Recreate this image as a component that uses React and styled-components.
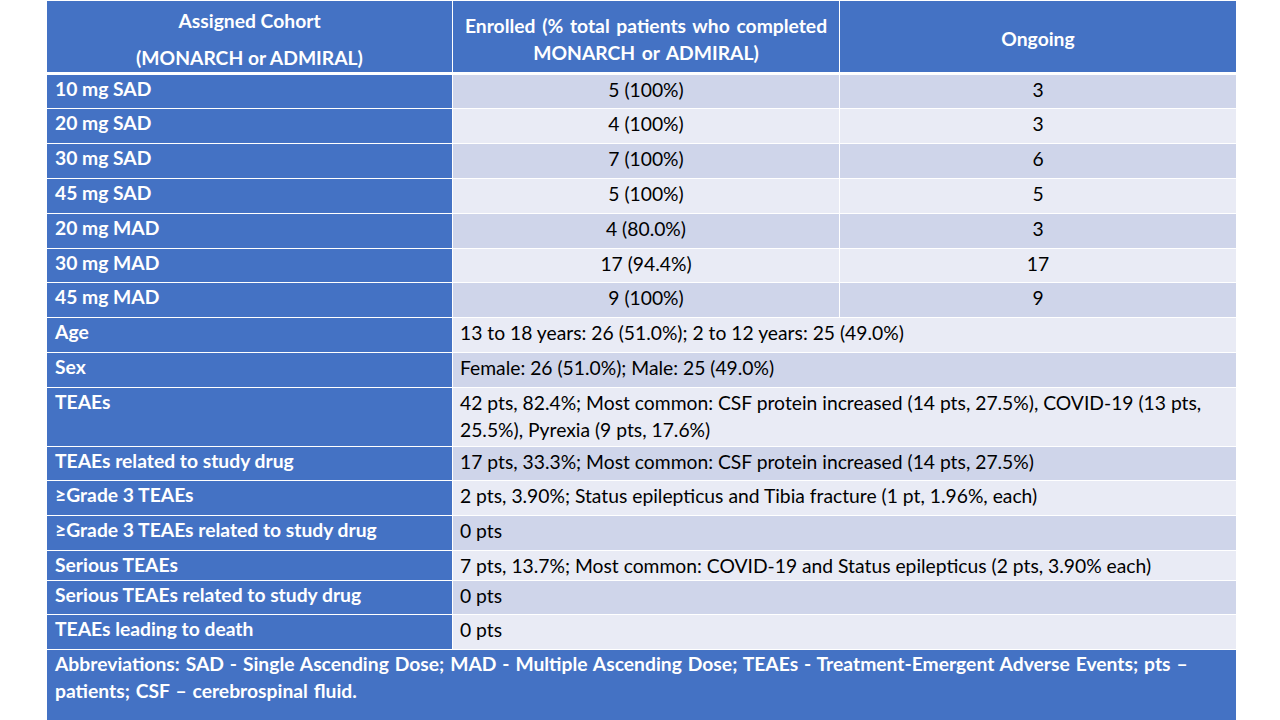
import React from 'react';
import styled, { createGlobalStyle } from 'styled-components';

const GlobalStyle = createGlobalStyle`
  html, body {
    margin: 0;
    padding: 0;
    background: #ffffff;
  }
  body {
    font-family: Lato, 'Liberation Sans', sans-serif;
  }
`;

const BLUE = '#4472c4';
const tones = {
  dark: '#cfd5ea',
  light: '#e9ebf5',
};

const Page = styled.div`
  width: 1280px;
  height: 720px;
  padding: 1px 0 0 47px;
  box-sizing: border-box;
  overflow: hidden;
`;

const Table = styled.div`
  display: grid;
  grid-template-columns: 405px 386px 396px;
  grid-template-rows:
    73px 33px 34px 34px 34px 34px 33px 34px 34px 34px 58px 33px 34px 34px
    29px 33px 34px 70px;
  column-gap: 1px;
  row-gap: 1px;
  width: 1189px;
  background: #ffffff;
  font-size: 19.3px;
  line-height: 27px;
`;

const HeadCell = styled.div`
  display: flex;
  flex-direction: column;
  align-items: center;
  justify-content: center;
  gap: ${props => props.$gap || 0}px;
  margin-bottom: 2px;
  padding-top: 4px;
  background: ${BLUE};
  color: #ffffff;
  font-weight: 700;
  text-align: center;
  white-space: nowrap;
  word-spacing: ${props => props.$spread || 0}px;
`;

const LabelCell = styled.div`
  padding: 0 8px;
  background: ${BLUE};
  color: #ffffff;
  font-weight: 700;
  white-space: nowrap;
`;

const ValueCell = styled.div`
  grid-column: span ${props => props.$span || 1};
  padding: 1px 7px 0;
  background: ${props => tones[props.$tone]};
  color: #000000;
  text-align: ${props => (props.$center ? 'center' : 'left')};
  white-space: nowrap;
`;

const Note = styled.div`
  grid-column: span 3;
  padding: 0 8px;
  background: ${BLUE};
  color: #ffffff;
  font-weight: 700;
  white-space: nowrap;
  word-spacing: 1.2px;
`;

const cohorts = [
  ['10 mg SAD', '5 (100%)', '3'],
  ['20 mg SAD', '4 (100%)', '3'],
  ['30 mg SAD', '7 (100%)', '6'],
  ['45 mg SAD', '5 (100%)', '5'],
  ['20 mg MAD', '4 (80.0%)', '3'],
  ['30 mg MAD', '17 (94.4%)', '17'],
  ['45 mg MAD', '9 (100%)', '9'],
];

const summary = [
  ['Age', '13 to 18 years: 26 (51.0%); 2 to 12 years: 25 (49.0%)'],
  ['Sex', 'Female: 26 (51.0%); Male: 25 (49.0%)'],
  [
    'TEAEs',
    <>
      42 pts, 82.4%; Most common: CSF protein increased (14 pts, 27.5%), COVID-19 (13 pts,
      <br />
      25.5%), Pyrexia (9 pts, 17.6%)
    </>,
  ],
  ['TEAEs related to study drug', '17 pts, 33.3%; Most common: CSF protein increased (14 pts, 27.5%)'],
  ['≥Grade 3 TEAEs', '2 pts, 3.90%; Status epilepticus and Tibia fracture (1 pt, 1.96%, each)'],
  ['≥Grade 3 TEAEs related to study drug', '0 pts'],
  ['Serious TEAEs', '7 pts, 13.7%; Most common: COVID-19 and Status epilepticus (2 pts, 3.90% each)'],
  ['Serious TEAEs related to study drug', '0 pts'],
  ['TEAEs leading to death', '0 pts'],
];

// rows alternate starting with the darker tint
const toneFor = i => (i % 2 === 0 ? 'dark' : 'light');

export default function App() {
  return (
    <Page>
      <GlobalStyle />
      <Table>
        <HeadCell $gap={10}>
          <span>Assigned Cohort</span>
          <span>(MONARCH or ADMIRAL)</span>
        </HeadCell>
        <HeadCell $spread={2}>
          <span>Enrolled (% total patients who completed</span>
          <span>MONARCH or ADMIRAL)</span>
        </HeadCell>
        <HeadCell>Ongoing</HeadCell>

        {cohorts.map(([label, enrolled, ongoing], i) => (
          <React.Fragment key={label}>
            <LabelCell>{label}</LabelCell>
            <ValueCell $tone={toneFor(i)} $center>
              {enrolled}
            </ValueCell>
            <ValueCell $tone={toneFor(i)} $center>
              {ongoing}
            </ValueCell>
          </React.Fragment>
        ))}

        {summary.map(([label, value], i) => (
          <React.Fragment key={label}>
            <LabelCell>{label}</LabelCell>
            <ValueCell $tone={toneFor(i + cohorts.length)} $span={2}>
              {value}
            </ValueCell>
          </React.Fragment>
        ))}

        <Note>
          Abbreviations: SAD - Single Ascending Dose; MAD - Multiple Ascending Dose; TEAEs - Treatment-Emergent
          Adverse Events; pts –<br />
          patients; CSF – cerebrospinal fluid.
        </Note>
      </Table>
    </Page>
  );
}
